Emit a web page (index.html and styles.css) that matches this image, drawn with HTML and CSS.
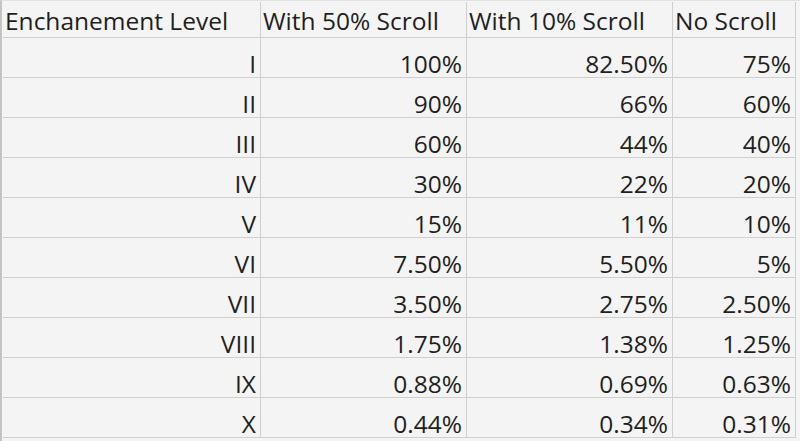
FILE: index.html
```html
<!DOCTYPE html>
<html>
<head>
<meta charset="utf-8">
<link rel="stylesheet" href="styles.css">
</head>
<body>
<div class="frame">
  <div class="sheet">
    <div class="cell head">Enchanement Level</div>
    <div class="cell head">With 50% Scroll</div>
    <div class="cell head">With 10% Scroll</div>
    <div class="cell head">No Scroll</div>

    <div class="cell">I</div><div class="cell">100%</div><div class="cell">82.50%</div><div class="cell">75%</div>
    <div class="cell">II</div><div class="cell">90%</div><div class="cell">66%</div><div class="cell">60%</div>
    <div class="cell">III</div><div class="cell">60%</div><div class="cell">44%</div><div class="cell">40%</div>
    <div class="cell">IV</div><div class="cell">30%</div><div class="cell">22%</div><div class="cell">20%</div>
    <div class="cell">V</div><div class="cell">15%</div><div class="cell">11%</div><div class="cell">10%</div>
    <div class="cell">VI</div><div class="cell">7.50%</div><div class="cell">5.50%</div><div class="cell">5%</div>
    <div class="cell">VII</div><div class="cell">3.50%</div><div class="cell">2.75%</div><div class="cell">2.50%</div>
    <div class="cell">VIII</div><div class="cell">1.75%</div><div class="cell">1.38%</div><div class="cell">1.25%</div>
    <div class="cell">IX</div><div class="cell">0.88%</div><div class="cell">0.69%</div><div class="cell">0.63%</div>
    <div class="cell">X</div><div class="cell">0.44%</div><div class="cell">0.34%</div><div class="cell">0.31%</div>
  </div>
</div>
</body>
</html>
```
FILE: styles.css
```css
html, body {
  margin: 0;
  padding: 0;
  background: #f4f4f4;
  width: 800px;
  height: 441px;
  overflow: hidden;
}
.frame {
  border-left: 2px solid #c4c4c4;
  padding-left: 1px;
  padding-top: 1px;
  height: 441px;
  border-top: 1px solid #e2e2e2;
  box-sizing: border-box;
}
.sheet {
  display: grid;
  grid-template-columns: 258px 206px 206px 123px;
  grid-template-rows: 36px repeat(10, 40px);
  font-family: "Open Sans", "Liberation Sans", sans-serif;
  font-size: 24.5px;
  color: #1f1f1f;
}
.cell {
  box-sizing: border-box;
  border-right: 1px solid #cfcfcf;
  border-bottom: 1px solid #cfcfcf;
  display: flex;
  align-items: flex-end;
  justify-content: flex-end;
  padding: 0 4px 1px 4px;
  line-height: 1;
  white-space: nowrap;
}
.cell.head {
  justify-content: flex-start;
  padding: 0 2px 4px 2px;
}
```
